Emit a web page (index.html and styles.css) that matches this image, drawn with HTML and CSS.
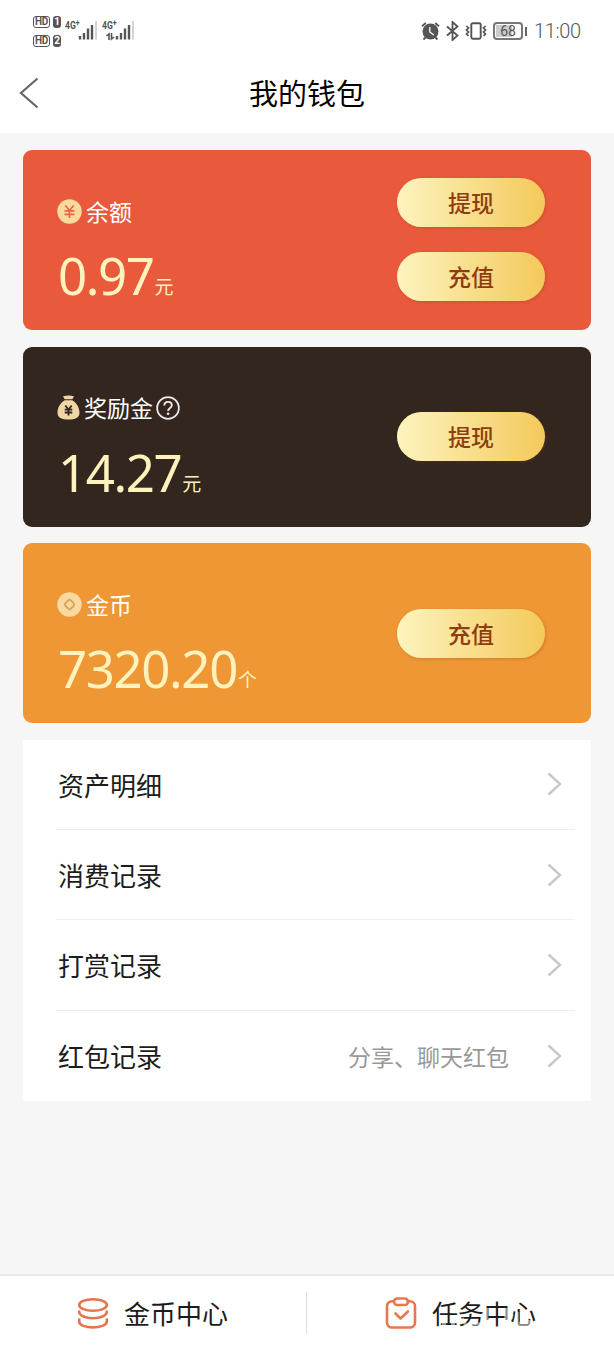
FILE: index.html
```html
<!DOCTYPE html>
<html lang="zh-CN">
<head>
<meta charset="utf-8">
<title>我的钱包</title>
<link rel="stylesheet" href="styles.css">
</head>
<body>
<div class="screen">
  <header class="top">
    <div class="status">
      <div class="status-left">
        <div class="hd-group">
          <div class="hd-row"><span class="hd">HD</span><span class="sim">1</span></div>
          <div class="hd-row"><span class="hd">HD</span><span class="sim">2</span></div>
        </div>
        <div class="signal">
          <span class="net">4G<sup>+</sup></span>
          <svg width="32" height="22" viewBox="0 0 32 22"><path d="M15 16v3.500M19 13v6.500M23 8.500v11M27 5v14.500" stroke="#555" stroke-width="2.400"/><path d="M31 1v18.500" stroke="#d4d4d4" stroke-width="2"/></svg>
        </div>
        <div class="signal">
          <span class="net">4G<sup>+</sup></span>
          <svg width="32" height="22" viewBox="0 0 32 22"><path d="M15 16v3.500M19 13v6.500M23 8.500v11M27 5v14.500" stroke="#555" stroke-width="2.400"/><path d="M31 1v18.500" stroke="#d4d4d4" stroke-width="2"/><path d="M4.500 16l2.500-2v6M9.500 13v6l2.500-2" fill="none" stroke="#555" stroke-width="1.600"/></svg>
        </div>
      </div>
      <div class="status-right">
        <svg class="alarm" width="19" height="20" viewBox="0 0 19 20"><circle cx="9.500" cy="10.500" r="8" fill="#555"/><path d="M1 5.200L4.800 2M14.200 2L18 5.200M4.500 16.500L2.500 18.500M14.500 16.500l2 2" stroke="#555" stroke-width="1.800"/><path d="M8.800 6v5l4 3" fill="none" stroke="#fff" stroke-width="1.300"/></svg>
        <svg class="bluetooth" width="13" height="20" viewBox="0 0 13 20"><path d="M1 5.500l10.500 9L6.500 19V1l5 4.500L1 14.500" fill="none" stroke="#555" stroke-width="1.800"/></svg>
        <svg class="vibrate" width="22" height="18" viewBox="0 0 22 18"><rect x="6.300" y="1.200" width="9.400" height="15.600" rx="1.500" fill="none" stroke="#555" stroke-width="1.900"/><path d="M1.500 4l2 2-2 2 2 2-2 2 2 2M20.500 4l-2 2 2 2-2 2 2 2-2 2" fill="none" stroke="#555" stroke-width="1.700"/></svg>
        <div class="battery"><span class="battery-text">68</span></div>
        <i class="battery-tip"></i>
        <span class="clock">11:00</span>
      </div>
    </div>
    <div class="nav">
      <svg class="back" width="20" height="32" viewBox="0 0 20 32"><path d="M18.500 1.500L2 16l16.500 14.500" fill="none" stroke="#666" stroke-width="2.200"/></svg>
      <h1 class="title">我的钱包</h1>
    </div>
  </header>

  <main class="content">
    <section class="card balance">
      <div class="info">
        <div class="label">
          <svg class="coin" width="25" height="25" viewBox="0 0 25 25"><circle cx="12.500" cy="12.500" r="12.200" fill="#f8daa1"/><path d="M8.300 6.500l4.200 5 4.200-5M7.500 11.800h10M7.500 15.300h10M12.500 11.500v7.500" fill="none" stroke="#e8653f" stroke-width="1.700"/></svg>
          <span class="label-text">余额</span>
        </div>
        <div class="amount"><span class="num">0.97</span><span class="unit">元</span></div>
      </div>
      <div class="actions"><button class="pill">提现</button><button class="pill">充值</button></div>
    </section>

    <section class="card reward">
      <div class="info">
        <div class="label">
          <svg class="bag" width="23" height="25" viewBox="0 0 23 25"><path d="M6 1.200Q11.500-.2 17 1.200L15.300 4.200H7.700zM7.700 5.200h7.600C19 7.500 22.500 12 22.500 17.500 22.500 23 18 24.500 11.500 24.500S.5 23 .5 17.500C.5 12 4 7.500 7.700 5.200z" fill="#f1d6a5"/><path d="M8.300 10.500l3.200 4 3.200-4M7.700 14.700h7.600M7.700 17.500h7.600M11.500 14v6.500" fill="none" stroke="#33261f" stroke-width="1.800"/></svg>
          <span class="label-text">奖励金</span>
          <svg class="help" width="24" height="24" viewBox="0 0 24 24"><circle cx="12" cy="12" r="10.900" fill="none" stroke="#eee9e6" stroke-width="1.700"/><path d="M8.300 9.500c0-2.200 1.500-3.600 3.700-3.600s3.800 1.400 3.800 3.400c0 2.600-3.700 2.900-3.700 5.700" fill="none" stroke="#eee9e6" stroke-width="1.900"/><circle cx="12.100" cy="17.700" r="1.300" fill="#eee9e6"/></svg>
        </div>
        <div class="amount"><span class="num">14.27</span><span class="unit">元</span></div>
      </div>
      <div class="actions"><button class="pill">提现</button></div>
    </section>

    <section class="card gold">
      <div class="info">
        <div class="label">
          <svg class="coin" width="25" height="25" viewBox="0 0 25 25"><circle cx="12.500" cy="12.500" r="12.200" fill="#f8daa1"/><rect x="8.700" y="8.700" width="7.600" height="7.600" rx="1.500" transform="rotate(45 12.500 12.500)" fill="none" stroke="#dda35a" stroke-width="1.900"/></svg>
          <span class="label-text">金币</span>
        </div>
        <div class="amount"><span class="num">7320.20</span><span class="unit">个</span></div>
      </div>
      <div class="actions"><button class="pill">充值</button></div>
    </section>

    <nav class="list">
      <a class="row"><span class="row-name">资产明细</span><svg class="chevron" width="15" height="24" viewBox="0 0 15 24"><path d="M1.500 1.500L13 12 1.500 22.500" /></svg></a>
      <a class="row"><span class="row-name">消费记录</span><svg class="chevron" width="15" height="24" viewBox="0 0 15 24"><path d="M1.500 1.500L13 12 1.500 22.500" /></svg></a>
      <a class="row"><span class="row-name">打赏记录</span><svg class="chevron" width="15" height="24" viewBox="0 0 15 24"><path d="M1.500 1.500L13 12 1.500 22.500" /></svg></a>
      <a class="row"><span class="row-name">红包记录</span><span class="hint">分享、聊天红包</span><svg class="chevron" width="15" height="24" viewBox="0 0 15 24"><path d="M1.500 1.500L13 12 1.500 22.500" /></svg></a>
    </nav>
  </main>

  <footer class="tabs">
    <a class="tab">
      <svg width="32" height="32" viewBox="0 0 32 32" fill="none" stroke="#e5754b" stroke-width="2.600" stroke-linecap="round"><ellipse cx="16" cy="8" rx="13.800" ry="5.800"/><path d="M2.200 14.500C2.200 23.500 29.800 23.500 29.800 14.500M2.200 22.500v2C2.200 32.300 29.800 32.300 29.800 24.500v-2"/></svg>
      <span class="tab-name">金币中心</span>
    </a>
    <a class="tab">
      <svg width="32" height="32" viewBox="0 0 32 32" fill="none" stroke="#e9764d" stroke-width="2.600" stroke-linecap="round" stroke-linejoin="round"><path d="M9 4.200H7a5 5 0 0 0-5 5V25.500a5 5 0 0 0 5 5H25a5 5 0 0 0 5-5V9.200a5 5 0 0 0-5-5H23"/><rect x="9" y="1.500" width="14" height="6.500" rx="3.200"/><path d="M10.500 16.500l5 5 7.500-7"/></svg>
      <span class="tab-name">任务中心<svg class="worn" width="106" height="38" viewBox="0 0 106 38" fill="none" stroke="#fff"><path d="M10 29.500h4M19 29.500h4M30 24l4 7M39 30h9M54.500 14v11M74 14v11M85 18v12h12v-4M80 20l-1 5" stroke-width="3.500" opacity=".5"/></svg></span>
    </a>
  </footer>
</div>
</body>
</html>
```
FILE: styles.css
```css
* { box-sizing: border-box; }
body {
  margin: 0;
  font-family: "Noto Sans CJK SC", sans-serif;
  background: #f6f6f6;
  color: #1c1c1c;
}
svg { display: block; flex: none; }
.screen { width: 614px; height: 1350px; display: flex; flex-direction: column; }

.top { height: 133px; background: #fff; }
.status { height: 60px; display: flex; justify-content: space-between; color: #555; }
.status-left { display: flex; padding: 16px 0 0 33px; }
.hd-group { display: flex; flex-direction: column; gap: 7px; width: 32px; }
.hd-row { display: flex; gap: 3px; height: 12px; }
.hd, .sim {
  font: bold 10px/10px Roboto, sans-serif;
  text-align: center;
  height: 12px;
  border-radius: 3px;
}
.hd { width: 17px; border: 1.5px solid #555; line-height: 10px; letter-spacing: -.4px; }
.sim { width: 8px; background: #555; color: #fff; line-height: 12px; }
.signal { width: 37px; padding-top: 4px; display: grid; }
.signal > * { grid-area: 1 / 1; }
.net { font: bold 11px/12px Roboto, sans-serif; transform: scaleX(.78); transform-origin: left; height: 12px; white-space: nowrap; }
.net sup { font-size: 9px; line-height: 0; vertical-align: 3px; }
.status-right { display: flex; align-items: center; padding: 2px 34px 0 0; height: 60px; }
.bluetooth { margin-left: 6px; }
.vibrate { margin-left: 6px; }
.battery {
  width: 30px; height: 18px; margin-left: 6px;
  border: 2px solid #777; border-radius: 4px; padding: 1px;
}
.battery-text {
  display: block; height: 12px;
  background: linear-gradient(90deg, #ccc 68%, #fff 68%);
  font: 400 14px/12px Roboto, sans-serif; text-align: center;
}
.battery-tip { width: 2px; height: 9px; margin-left: 2px; background: #666; }
.clock { margin-left: 7px; font: 20px/24px Roboto, sans-serif; font-weight: 300; letter-spacing: -.4px; width: 46px; white-space: nowrap; }
.nav { display: grid; grid-template-columns: 80px 1fr 80px; align-items: center; height: 65px; }
.back { margin-left: 19px; }
.title { margin: 0; font-size: 29px; font-weight: 400; line-height: 38px; padding-bottom: 2px; text-align: center; color: #000; }

.content { flex: 1; padding: 17px 23px 0; display: flex; flex-direction: column; gap: 16.500px; }
.card {
  height: 180px; border-radius: 9px; padding: 0 46px 0 34px;
  display: flex; justify-content: space-between;
}
.balance { background: #e9593c; }
.reward { background: #33261f; }
.gold { background: #ef9635; }
.info { padding-top: 44px; }
.label { display: flex; align-items: center; height: 34px; color: #fff; }
.label-text { font-size: 23px; line-height: 34px; margin-left: 4px; padding-bottom: 1px; }
.bag + .label-text { margin-left: 4px; }
.help { margin-left: 3px; }
.amount { display: flex; align-items: baseline; height: 60px; margin-top: 17px; color: #fff2bd; line-height: 60px; }
.num { font-family: "Noto Sans", "Open Sans", sans-serif; font-size: 51px; letter-spacing: -1.400px; margin-left: 1px; }
.unit { font-size: 19px; line-height: 28px; margin-left: 1px; position: relative; top: -1px; }
.actions { display: flex; flex-direction: column; justify-content: center; gap: 25px; }
.balance .actions { padding-bottom: 1px; }
.pill {
  width: 148px; height: 49px; border: 0; padding: 0 0 1px;
  border-radius: 25px; background: linear-gradient(90deg, #fdf4bf, #f4c95a);
  box-shadow: 1px 1px 3px rgba(130, 70, 10, .3);
  font: 500 23px/34px "Noto Sans CJK SC", sans-serif; color: #8f3d10;
}

.list { background: #fff; height: 361.500px; padding: 0 16px 0 33px; display: grid; grid-template-rows: repeat(4, 1fr); }
.row { display: flex; align-items: center; border-bottom: 1px solid #f0f0f0; padding: 0 13px 0 2px; }
.row:last-child { border: 0; }
.row-name { font-size: 26px; line-height: 38px; flex: 1; padding-top: 1px; }
.hint { font-size: 23px; line-height: 34px; color: #999; margin-right: 38px; }
.chevron path { fill: none; stroke: #c8c8c8; stroke-width: 2.400; }

.tabs { height: 76px; background: #fff; border-top: 2px solid #e8e8e8; display: grid; grid-template-columns: 306px 1fr; align-items: center; }
.tab { display: flex; align-items: center; justify-content: center; gap: 15px; height: 42px; }
.tab + .tab { border-left: 1.500px solid #ddd; }
.tab:first-child { padding-right: 1px; }
.tab-name { position: relative; font-size: 26px; line-height: 38px; }
.worn { position: absolute; left: 0; top: 0; }
```
